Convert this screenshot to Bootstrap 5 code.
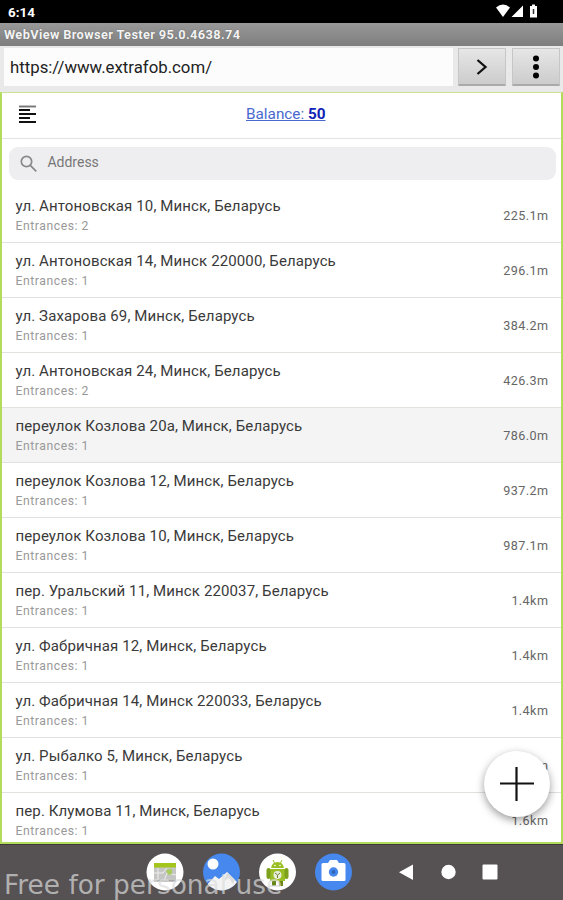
<!DOCTYPE html>
<html lang="ru">
<head>
<meta charset="utf-8">
<meta name="viewport" content="width=device-width, initial-scale=1">
<title>WebView Browser Tester</title>
<link href="https://cdn.jsdelivr.net/npm/bootstrap@5.3.0/dist/css/bootstrap.min.css" rel="stylesheet">
<style>
body{font-family:Roboto,"Liberation Sans",sans-serif;height:900px;overflow:hidden;color:#333;background:#fff}
svg{display:block;flex:none}
.status{height:23px;background:#000;font-size:13.4px;font-weight:700;line-height:25px;padding:0 24px 0 8px}
.titlebar{height:23px;background:linear-gradient(#999,#7d7d7d);color:#f4f4f4;font-size:12.8px;letter-spacing:.36px;font-weight:700;line-height:24px;padding-left:4px;text-shadow:0 0 1px #555}
.urlbar{height:46px;background:#e9e9e9;padding:2px 2px 6px 4px}
.url{background:#fcfcfc;color:#222;font-size:16.8px;line-height:39px;height:38px;width:449px;padding-left:6px}
.key{width:48px;height:38px;margin-left:5px;border-radius:1px;background:linear-gradient(#e6e6e6,#ccc);border:1px solid #c6c6c6;border-bottom:2px solid #aaa}
.key+.key{margin-left:6px}
.page{height:752px;border:2px solid #b4dc5c;border-top:1px solid #c9e394;overflow:hidden}
.head{height:46px;border-bottom:1px solid #e3e3e3;padding:0 0 4px 17px}
.balance{font-size:15.3px;color:#4a69cf;left:244px;top:10px}
.balance b{color:#1023b4}
.search{height:33px;margin:8px 5px 8px 7px;border-radius:9px;background:#eeeef0;color:#777;font-size:14px;padding:0 0 2px 11px}
.search svg{margin-top:2px}
.place{height:55.02px;border-bottom:1.5px solid #e0e2de;padding:8px 13px 0 13.5px}
.place.on{background:#f4f4f4}
.addr{font-size:15px;letter-spacing:.12px;line-height:20px;color:#3a3a3a;white-space:nowrap}
.entr{font-size:12.2px;letter-spacing:.55px;line-height:18px;margin-top:1px;color:#999}
.dist{font-size:12.6px;letter-spacing:.42px;line-height:18px;margin:11px -.4px 0 0;color:#666}
.fab{width:66px;height:66px;left:484px;top:751px;background:#fff;box-shadow:0 3px 8px #0006}
.dock{height:56px;background:#565153;border-top:1px solid #3c383a}
.dock svg{position:absolute;left:0;top:0}
.wm{left:4px;top:869px;font-family:"DejaVu Sans",sans-serif;font-size:26.4px;line-height:31px;color:#ddd;opacity:.68;white-space:nowrap}
</style>
</head>
<body class="position-relative">
<div class="status d-flex justify-content-between text-white"><span>6:14</span>
<svg width="43" height="23" viewBox="0 0 43 23" fill="#fff"><path d="M0 7.500Q7 1.500 14 7.500L7 17zM27 5.500v11.500H15.500zM34 6h2V4.500h3V6h2v11.500h-7z"/><path d="M37.500 9v5" stroke="#333" stroke-width="1.500"/></svg></div>
<div class="titlebar"><span>WebView Browser Tester 95.0.4638.74</span></div>
<div class="urlbar d-flex">
<div class="url"><span>https://www.extrafob.com/</span></div>
<div class="key d-flex align-items-center justify-content-center"><svg width="20" height="20" viewBox="0 0 20 20"><path d="M5.500 3l8 7-8 7" fill="none" stroke="#111" stroke-width="2.300"/></svg></div>
<div class="key d-flex align-items-center justify-content-center"><svg width="10" height="24" viewBox="0 0 10 24"><circle cx="5" cy="3.500" r="3"/><circle cx="5" cy="12" r="3"/><circle cx="5" cy="20.500" r="3"/></svg></div>
</div>
<main class="page">
<header class="head position-relative d-flex align-items-center"><svg width="17" height="18" viewBox="0 0 17 18" stroke="#111" stroke-width="1.900"><path d="M0 1.500h17" stroke="#777"/><path d="M0 5h11M0 9h17M0 13h11M0 17h17"/></svg>
<a class="balance position-absolute text-decoration-underline">Balance: <b>50</b></a></header>
<div class="search d-flex align-items-center"><svg width="18" height="18" viewBox="0 0 18 18" fill="none" stroke="#888" stroke-width="1.700"><circle cx="6.500" cy="6.500" r="5.200"/><path d="M10.300 10.300l6 6"/></svg><span class="ms-2 ps-0">&#8202;Address</span></div>
<div id="places">
<div class="place d-flex justify-content-between"><div><div class="addr">ул. Антоновская 10, Минск, Беларусь</div><div class="entr">Entrances: 2</div></div><span class="dist">225.1m</span></div>
<div class="place d-flex justify-content-between"><div><div class="addr">ул. Антоновская 14, Минск 220000, Беларусь</div><div class="entr">Entrances: 1</div></div><span class="dist">296.1m</span></div>
<div class="place d-flex justify-content-between"><div><div class="addr">ул. Захарова 69, Минск, Беларусь</div><div class="entr">Entrances: 1</div></div><span class="dist">384.2m</span></div>
<div class="place d-flex justify-content-between"><div><div class="addr">ул. Антоновская 24, Минск, Беларусь</div><div class="entr">Entrances: 2</div></div><span class="dist">426.3m</span></div>
<div class="place on d-flex justify-content-between"><div><div class="addr">переулок Козлова 20а, Минск, Беларусь</div><div class="entr">Entrances: 1</div></div><span class="dist">786.0m</span></div>
<div class="place d-flex justify-content-between"><div><div class="addr">переулок Козлова 12, Минск, Беларусь</div><div class="entr">Entrances: 1</div></div><span class="dist">937.2m</span></div>
<div class="place d-flex justify-content-between"><div><div class="addr">переулок Козлова 10, Минск, Беларусь</div><div class="entr">Entrances: 1</div></div><span class="dist">987.1m</span></div>
<div class="place d-flex justify-content-between"><div><div class="addr">пер. Уральский 11, Минск 220037, Беларусь</div><div class="entr">Entrances: 1</div></div><span class="dist">1.4km</span></div>
<div class="place d-flex justify-content-between"><div><div class="addr">ул. Фабричная 12, Минск, Беларусь</div><div class="entr">Entrances: 1</div></div><span class="dist">1.4km</span></div>
<div class="place d-flex justify-content-between"><div><div class="addr">ул. Фабричная 14, Минск 220033, Беларусь</div><div class="entr">Entrances: 1</div></div><span class="dist">1.4km</span></div>
<div class="place d-flex justify-content-between"><div><div class="addr">ул. Рыбалко 5, Минск, Беларусь</div><div class="entr">Entrances: 1</div></div><span class="dist">m</span></div>
<div class="place d-flex justify-content-between"><div><div class="addr">пер. Клумова 11, Минск, Беларусь</div><div class="entr">Entrances: 1</div></div><span class="dist">1.6km</span></div>
</div>
</main>
<div class="fab position-absolute rounded-circle d-flex align-items-center justify-content-center"><svg width="34" height="34" viewBox="0 0 34 34"><path d="M16.500 0v34M0 16.500h34" stroke="#111" stroke-width="2.200"/></svg></div>
<footer class="dock position-relative">
<svg width="563" height="55" viewBox="0 845 563 55">
<circle cx="165" cy="872" r="18.500" fill="#fff"/>
<path d="M154 863h22v18h-22z" fill="#c4c6c4"/><path d="M154 863h22v4.500h-22z" fill="#a4c51c"/><path d="M154 873h9l4-5M164 881l3-8 9 2M158 868v13" stroke="#eee" fill="none"/><path d="M166 870l6-1v5l-4 1z" fill="#a9cc5c"/><path d="M154 881h22" stroke="#888"/>
<clipPath id="gal"><circle cx="221.500" cy="872" r="18.500"/></clipPath>
<g clip-path="url(#gal)"><path d="M202 853h39v39h-39z" fill="#4688ee"/><circle cx="213" cy="864" r="5.500" fill="#fff"/><path d="M206 886l9-10 4 3 8-7 13 13v8h-34z" fill="#f4f4f4"/><path d="M227 872l-3 9 5-3 4 6 2-4z" fill="#ddd"/></g>
<circle cx="277.500" cy="872" r="18.500" fill="#fff"/>
<g fill="#9abf25"><path d="M271 868q1-6 6.500-6t6.500 6zM270 869h15v12h-15z"/><rect x="266.500" y="868" width="4" height="11" rx="2" fill="#7da01d"/><rect x="284.500" y="868" width="4" height="11" rx="2" fill="#7da01d"/><path d="M272 881h4v5h-4zM279 881h4v5h-4z" fill="#66851a"/><path d="M273 860l1.500 3M282 860l-1.500 3" stroke="#9abf25"/></g><circle cx="277.500" cy="875" r="4" fill="#e8eddc"/><path d="M277.500 875v3M275 873l2.500 2 2.500-2" stroke="#71842f" fill="none"/><circle cx="275" cy="865.500" r=".8" fill="#fff"/><circle cx="280" cy="865.500" r=".8" fill="#fff"/>
<circle cx="333.500" cy="872" r="18.500" fill="#4688ee"/><path d="M323 863h5l2-3h7l2 3h5q1.500 0 1.500 1.500v15q0 1.500-1.500 1.500h-21q-1.500 0-1.500-1.500v-15q0-1.500 1.500-1.500z" fill="#fff"/><circle cx="333.500" cy="872" r="4.700" fill="#4688ee"/><circle cx="333.500" cy="872" r="2" fill="#2d65bd"/>
<g fill="#fff"><path d="M413 864.500v15.500l-14-7.800z"/><circle cx="448.500" cy="872" r="7.200"/><rect x="482.500" y="864.500" width="15" height="15" rx="1"/></g>
</svg>
</footer>
<div class="wm position-absolute">Free for personal use</div>
<script src="https://cdn.jsdelivr.net/npm/bootstrap@5.3.0/dist/js/bootstrap.bundle.min.js"></script>
</body>
</html>
